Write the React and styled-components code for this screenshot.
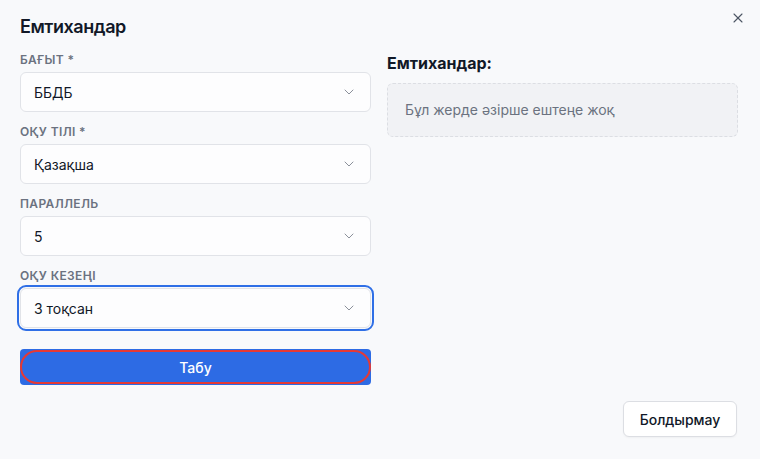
import React from 'react';
import styled, { createGlobalStyle } from 'styled-components';
import { ChevronDown, X } from 'lucide-react';

const GlobalStyle = createGlobalStyle`
  html, body {
    margin: 0;
    padding: 0;
    background: #f8f9fb;
    font-family: Inter, "Noto Sans", sans-serif;
    color: #111827;
  }
  * { box-sizing: border-box; }
`;

const Dialog = styled.div`
  position: relative;
  height: 459px;
  display: flex;
  flex-direction: column;
  padding: 13px 22px 22px 20px;
`;

const Title = styled.h2`
  margin: 0;
  font-size: 18px;
  line-height: 28px;
  font-weight: 600;
  letter-spacing: -0.025em;
  color: #111827;
`;

const CloseButton = styled.button`
  position: absolute;
  top: 10px;
  right: 14px;
  width: 16px;
  height: 16px;
  padding: 0;
  border: 0;
  background: none;
  color: #4b5563;
  display: flex;
  align-items: center;
  justify-content: center;
`;

const Body = styled.div`
  display: grid;
  grid-template-columns: 1fr 1fr;
  column-gap: 16px;
  margin-top: 10px;
`;

const Form = styled.div`
  display: flex;
  flex-direction: column;
  gap: 11px;
`;

const Field = styled.div`
  display: flex;
  flex-direction: column;
  gap: 3px;
`;

const Label = styled.label`
  font-size: 12px;
  line-height: 18px;
  font-weight: 600;
  letter-spacing: 0.03em;
  color: #6b7280;
  text-transform: uppercase;
`;

const Select = styled.div`
  height: 40px;
  display: flex;
  align-items: center;
  justify-content: space-between;
  padding: 0 13px 0 13px;
  background: #fdfdfe;
  border: 1px solid #e1e3e8;
  border-radius: 6px;
  font-size: 14px;
  color: #111827;
  outline: ${p => (p.$focused ? '2px solid #2f6fe6' : 'none')};
  outline-offset: 1px;
  svg { color: #8b909a; }
`;

const SubmitButton = styled.button`
  position: relative;
  margin-top: 10px;
  height: 36px;
  border: 0;
  border-radius: 4px;
  background: #2d6be4;
  color: #fff;
  font-family: inherit;
  font-size: 14px;
  font-weight: 500;
  &::after {
    content: '';
    position: absolute;
    inset: 1px 0;
    border: 2px solid #e53935;
    border-radius: 999px;
  }
`;

const Side = styled.div`
  display: flex;
  flex-direction: column;
  gap: 8px;
`;

const SideTitle = styled.h3`
  margin: 0;
  font-size: 16px;
  line-height: 24px;
  font-weight: 700;
  color: #111827;
`;

const Empty = styled.div`
  padding: 16px 17px;
  background: #f1f2f5;
  border: 1px dashed #dcdee3;
  border-radius: 6px;
  font-size: 14px;
  line-height: 20px;
  color: #6b7280;
`;

const Footer = styled.div`
  margin-top: auto;
  display: flex;
  justify-content: flex-end;
  padding-right: 1px;
`;

const CancelButton = styled.button`
  height: 36px;
  width: 114px;
  border: 1px solid #dcdee3;
  border-radius: 6px;
  background: #fff;
  font-family: inherit;
  font-size: 14px;
  font-weight: 500;
  color: #111827;
  box-shadow: 0 1px 2px rgba(0, 0, 0, 0.04);
`;

const fields = [
  { label: 'Бағыт *', value: 'ББДБ' },
  { label: 'Оқу тілі *', value: 'Қазақша' },
  { label: 'Параллель', value: '5' },
  { label: 'Оқу кезеңі', value: '3 тоқсан', focused: true },
];

export default function App() {
  return (
    <>
      <GlobalStyle />
      <Dialog>
        <Title>Емтихандар</Title>
        <CloseButton aria-label="close">
          <X size={16} strokeWidth={1.6} />
        </CloseButton>
        <Body>
          <Form>
            {fields.map(f => (
              <Field key={f.label}>
                <Label>{f.label}</Label>
                <Select $focused={f.focused}>
                  <span>{f.value}</span>
                  <ChevronDown size={16} strokeWidth={1.5} />
                </Select>
              </Field>
            ))}
            <SubmitButton>Табу</SubmitButton>
          </Form>
          <Side>
            <SideTitle>Емтихандар:</SideTitle>
            <Empty>Бұл жерде әзірше ештеңе жоқ</Empty>
          </Side>
        </Body>
        <Footer>
          <CancelButton>Болдырмау</CancelButton>
        </Footer>
      </Dialog>
    </>
  );
}
